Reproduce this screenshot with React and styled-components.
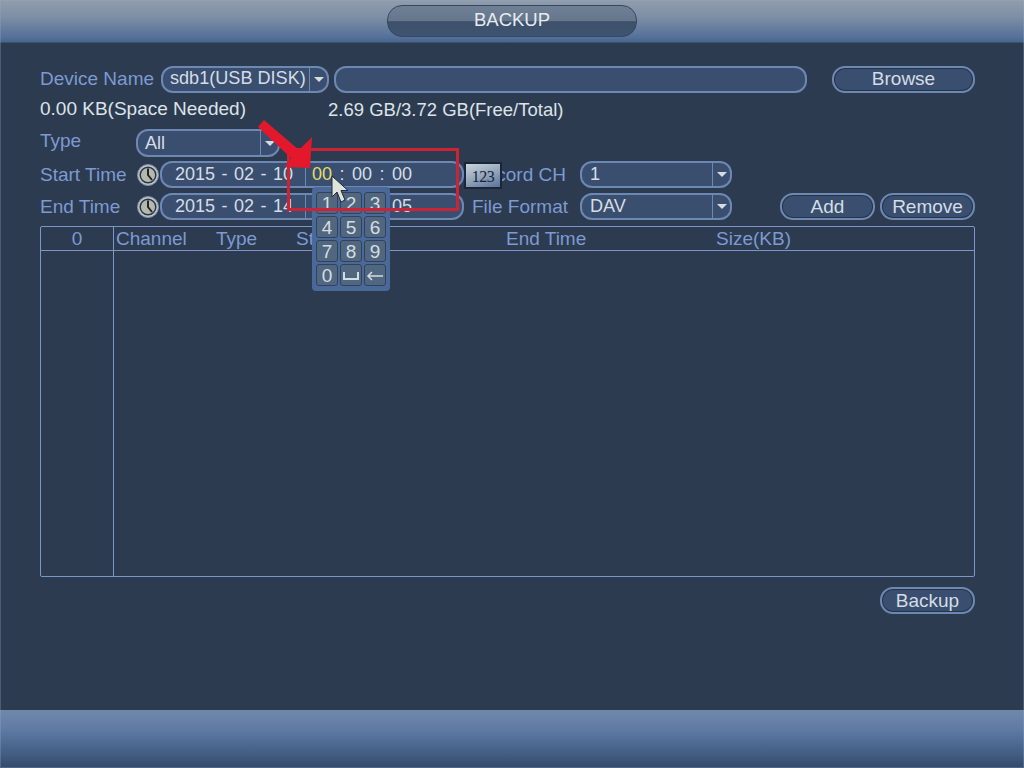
import React from 'react';
import styled, { createGlobalStyle } from 'styled-components';

const GlobalStyle = createGlobalStyle`
  html, body {
    margin: 0;
    padding: 0;
    background: #2c3b50;
  }
  * {
    box-sizing: border-box;
  }
`;

const Screen = styled.div`
  position: relative;
  width: 1024px;
  height: 768px;
  overflow: hidden;
  display: flex;
  flex-direction: column;
  background: #2c3b50;
  font-family: 'Liberation Sans', Arial, sans-serif;
  font-size: 19px;
  color: #d5dde4;

  &::after {
    content: '';
    position: absolute;
    inset: 0;
    border: 1px solid rgba(150, 172, 205, 0.3);
    pointer-events: none;
  }
`;

const TopBar = styled.header`
  height: 43px;
  flex: none;
  display: flex;
  justify-content: center;
  padding-top: 5px;
  background: linear-gradient(#919dac 0%, #7d8ea5 40%, #56719a 85%, #4a668f 97%, #34465f 100%);
`;

const TitlePill = styled.div`
  width: 250px;
  height: 32px;
  border-radius: 15px;
  border: 1px solid #36475f;
  background: linear-gradient(#6f7f94 0%, #66778d 50%, #3d506c 52%, #3f5470 100%);
  color: #e6ebef;
  font-size: 18.5px;
  line-height: 28px;
  text-align: center;
`;

const Content = styled.main`
  flex: 1;
  padding: 23px 49px 0 40px;
  display: flex;
  flex-direction: column;
`;

const Row = styled.div`
  display: flex;
  align-items: center;
  height: ${(p) => p.$height || 27}px;
  margin-bottom: ${(p) => p.$gap || 0}px;
`;

const Label = styled.span`
  flex: none;
  width: ${(p) => p.$width}px;
  color: #7d9ad2;
  white-space: nowrap;
  ${(p) => p.$lift && `margin-top: -${p.$lift}px;`}
  ${(p) => p.$right && `text-align: right; padding-right: ${p.$right}px;`}
`;

const NeededInfo = styled.span`
  flex: none;
  width: 288px;
  margin-top: -3px;
  color: #dde3e8;
  white-space: nowrap;
`;

const FreeInfo = styled.span`
  flex: none;
  font-size: 18.5px;
  color: #dde3e8;
  white-space: nowrap;
`;

const Field = styled.div`
  flex: none;
  width: ${(p) => p.$width}px;
  height: ${(p) => p.$height || 27}px;
  margin-left: ${(p) => p.$ml || 0}px;
  border: 2px solid #6e88b4;
  border-radius: 12px;
  background: #3a4f6f;
  font-size: 18.1px;
  display: flex;
  align-items: center;
  overflow: hidden;
`;

const FieldText = styled.span`
  flex: 1;
  padding-left: ${(p) => p.$pad || 7}px;
  padding-bottom: ${(p) => p.$lift || 0}px;
  white-space: nowrap;
  color: #d5dde4;
`;

const Caret = styled.span`
  flex: none;
  width: 18px;
  height: 100%;
  border-left: 1px solid #6e88b4;
  display: flex;
  align-items: center;
  justify-content: center;

  &::after {
    content: '';
    border-left: 5px solid transparent;
    border-right: 5px solid transparent;
    border-top: 5px solid #d5dde4;
  }
`;

const DatePart = styled.span`
  flex: none;
  width: 144px;
  height: 100%;
  padding-left: 13px;
  font-size: 18px;
  line-height: 23px;
  border-right: 1px solid #6e88b4;
  word-spacing: 1.5px;
  white-space: nowrap;
`;

const TimePart = styled.span`
  flex: 1;
  padding-left: 6px;
  font-size: 18px;
  word-spacing: 2.5px;
  white-space: nowrap;
`;

const Active = styled.span`
  color: #e4dc6c;
`;

const Button = styled.button`
  flex: none;
  width: ${(p) => p.$width}px;
  height: 27px;
  margin-left: ${(p) => p.$ml || 0}px;
  padding: 0 0 ${(p) => p.$lift || 0}px;
  border: 2px solid #6e88b4;
  border-radius: 13px;
  background: #3a4f6f;
  box-shadow: inset 0 0 0 1px #26344a;
  color: #d5dde4;
  font: inherit;
`;

const ClockIcon = styled.svg`
  flex: none;
  width: 22px;
  height: 22px;
  margin-right: 1px;
`;

const Table = styled.section`
  margin-top: 6px;
  width: 935px;
  height: 351px;
  border: 1px solid #7d97c4;
  border-radius: 2px;
  display: grid;
  grid-template-columns: 73px 1fr;
  grid-template-rows: 24px 1fr;
`;

const IndexHead = styled.div`
  border-bottom: 1px solid #7d97c4;
  border-right: 1px solid #7d97c4;
  color: #7d9ad2;
  text-align: center;
  line-height: 23px;
`;

const Heads = styled.div`
  display: grid;
  grid-template-columns: 100px 80px 210px 210px 1fr;
  padding-left: 2px;
  border-bottom: 1px solid #7d97c4;
  color: #7d9ad2;
  line-height: 23px;
`;

const IndexColumn = styled.div`
  border-right: 1px solid #7d97c4;
`;

const BackupRow = styled.div`
  display: flex;
  justify-content: flex-end;
  margin-top: 10px;
  width: 935px;
`;

const BottomBar = styled.footer`
  height: 58px;
  flex: none;
  background: linear-gradient(#6f88ac 0%, #5f7aa2 35%, #466188 70%, #34496a 100%);
`;

const Keypad = styled.div`
  position: absolute;
  left: 312px;
  top: 187px;
  width: 78px;
  height: 104px;
  padding: 5px 4px;
  border-radius: 4px;
  background: #4a6898;
  display: grid;
  grid-template-columns: repeat(3, 22px);
  grid-auto-rows: 22px;
  gap: 2px;
`;

const Key = styled.div`
  border: 1px solid #31435c;
  border-radius: 3px;
  padding-top: 1px;
  background: #51677f;
  color: #d5dde0;
  font-size: 19px;
  display: flex;
  align-items: center;
  justify-content: center;
`;

const SmallButton = styled.div`
  position: absolute;
  left: 464px;
  top: 162px;
  width: 38px;
  height: 27px;
  border: 2px solid #1c2636;
  background: linear-gradient(160deg, #cbd5de, #8fa2ba 55%, #5a7399);
  color: #1a2230;
  font-family: 'Liberation Serif', serif;
  font-size: 16px;
  line-height: 25px;
  text-align: center;
  letter-spacing: -0.5px;
`;

const Highlight = styled.div`
  position: absolute;
  left: 287px;
  top: 148px;
  width: 172px;
  height: 63px;
  border: 3px solid #cb2436;
`;

const Overlay = styled.svg`
  position: absolute;
  left: ${(p) => p.$x}px;
  top: ${(p) => p.$y}px;
  width: ${(p) => p.$w}px;
  height: ${(p) => p.$h}px;
`;

const Clock = () => (
  <ClockIcon viewBox="0 0 22 22">
    <circle cx="11" cy="11" r="10.5" fill="#bcc4cf" stroke="#7f8da3" />
    <circle cx="11" cy="11" r="7.8" fill="#b5b9ad" stroke="#2f3744" strokeWidth="1.5" />
    <path d="M11 4.5V11L15 16" fill="none" stroke="#20262e" strokeWidth="2" />
  </ClockIcon>
);

const Select = ({ width, ml, height, lift, children, pad }) => (
  <Field $width={width} $ml={ml} $height={height}>
    <FieldText $pad={pad} $lift={lift}>{children}</FieldText>
    <Caret />
  </Field>
);

const keys = ['1', '2', '3', '4', '5', '6', '7', '8', '9', '0'];

const App = () => (
  <Screen>
    <GlobalStyle />
    <TopBar>
      <TitlePill>BACKUP</TitlePill>
    </TopBar>
    <Content>
      <Row $gap={2}>
        <Label $width={121} $lift={2}>Device Name</Label>
        <Select width={168} lift={2}>sdb1(USB DISK)</Select>
        <Field $width={473} $ml={5} />
        <Button $width={143} $ml={25} $lift={2}>Browse</Button>
      </Row>
      <Row $gap={4} $height={30}>
        <NeededInfo>0.00 KB(Space Needed)</NeededInfo>
        <FreeInfo>2.69 GB/3.72 GB(Free/Total)</FreeInfo>
      </Row>
      <Row $gap={4} $height={28}>
        <Label $width={96} $lift={4}>Type</Label>
        <Select width={144} height={28}>All</Select>
      </Row>
      <Row $gap={5}>
        <Label $width={97}>Start Time</Label>
        <Clock />
        <Field $width={304}>
          <DatePart>2015 - 02 - 10</DatePart>
          <TimePart>
            <Active>00</Active> : 00 : 00
          </TimePart>
        </Field>
        <Label $width={116} $right={14}>Record CH</Label>
        <Select width={152} pad={8}>1</Select>
      </Row>
      <Row>
        <Label $width={97}>End Time</Label>
        <Clock />
        <Field $width={304}>
          <DatePart>2015 - 02 - 14</DatePart>
          <TimePart>00 : 00 : 05</TimePart>
        </Field>
        <Label $width={116} $right={12}>File Format</Label>
        <Select width={152} pad={8}>DAV</Select>
        <Button $width={95} $ml={48}>Add</Button>
        <Button $width={95} $ml={5}>Remove</Button>
      </Row>
      <Table>
        <IndexHead>0</IndexHead>
        <Heads>
          <span>Channel</span>
          <span>Type</span>
          <span>Start Time</span>
          <span>End Time</span>
          <span>Size(KB)</span>
        </Heads>
        <IndexColumn />
        <div />
      </Table>
      <BackupRow>
        <Button $width={95}>Backup</Button>
      </BackupRow>
    </Content>
    <BottomBar />

    <SmallButton>123</SmallButton>
    <Keypad>
      {keys.map((k) => (
        <Key key={k}>{k}</Key>
      ))}
      <Key>
        <svg width="16" height="10" viewBox="0 0 16 10">
          <path d="M1 1V8H15V1" fill="none" stroke="#d5dde4" strokeWidth="2" />
        </svg>
      </Key>
      <Key>
        <svg width="18" height="10" viewBox="0 0 18 10">
          <path d="M17 5H2M6 1L2 5L6 9" fill="none" stroke="#d5dde4" strokeWidth="1.5" />
        </svg>
      </Key>
    </Keypad>
    <Highlight />
    <Overlay $x={255} $y={115} $w={65} $h={65} viewBox="0 0 65 65">
      <path d="M9 5L3 12L36 43L30 52L55 53L57 22L44 35Z" fill="#e3192b" />
    </Overlay>
    <Overlay $x={328} $y={172} $w={24} $h={34} viewBox="0 0 24 34">
      <path
        d="M4 4V25L9 20L13 30L17 28L13 18.5L20 18.5Z"
        fill="#dfe3dc"
        stroke="#20293a"
        strokeWidth="1"
      />
    </Overlay>
  </Screen>
);

export default App;
